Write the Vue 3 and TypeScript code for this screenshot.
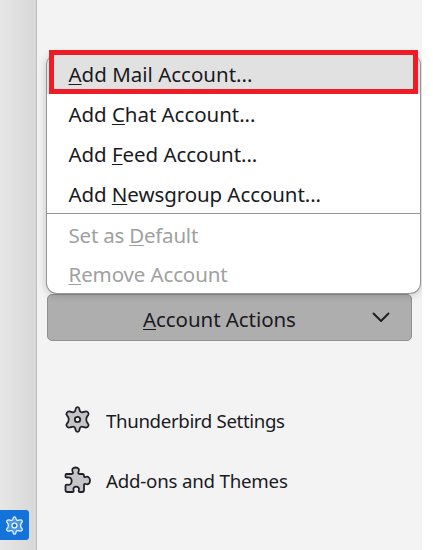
<script setup lang="ts">
interface MenuItem {
  before: string
  key: string
  after: string
  id: string
  disabled?: boolean
}

const addItems: MenuItem[] = [
  { id: 'mail', before: '', key: 'A', after: 'dd Mail Account...' },
  { id: 'chat', before: 'Add ', key: 'C', after: 'hat Account...' },
  { id: 'feed', before: 'Add ', key: 'F', after: 'eed Account...' },
  { id: 'news', before: 'Add ', key: 'N', after: 'ewsgroup Account...' },
]
const accountItems: MenuItem[] = [
  { id: 'default', before: 'Set as ', key: 'D', after: 'efault', disabled: true },
  { id: 'remove', before: '', key: 'R', after: 'emove Account', disabled: true },
]
const gear =
  'M10.3 2.8Q10.6 1 12 1T13.7 2.8L14.2 4.6Q15 6 16.7 5.5L18.8 4.9Q20.6 4.5 21.5 5.9T21.4 8.2L20.2 10Q19.2 12 20.2 14L21.4 15.8Q22.4 16.8 21.5 18.1T18.8 19.1L16.7 18.5Q15 18 14.2 19.4L13.7 21.2Q13.4 23 12 23T10.3 21.2L9.8 19.4Q9 18 7.3 18.5L5.2 19.1Q3.4 19.5 2.5 18.1T2.6 15.8L3.8 14Q4.8 12 3.8 10L2.6 8.2Q1.6 7.2 2.5 5.9T5.2 4.9L7.3 5.5Q9 6 9.8 4.6Z'
</script>

<template>
  <div class="window">
    <aside class="spaces">
      <button class="space-button" aria-label="Settings">
        <svg viewBox="0 0 24 24" width="19" height="19"><path :d="gear" /><circle cx="12" cy="12" r="3.1" /></svg>
      </button>
    </aside>
    <main class="pane">
      <button class="actions">
        <span class="actions-label"><u>A</u>ccount Actions</span>
        <svg class="chevron" viewBox="0 0 18 11" width="18" height="11"><path d="M1.5 1.5L9 9L16.5 1.5" /></svg>
      </button>
      <nav class="links">
        <a class="link">
          <svg viewBox="0 0 24 24" width="27" height="27"><path :d="gear" /><circle cx="12" cy="12" r="2.4" /></svg>
          <span class="settings">Thunderbird Settings</span>
        </a>
        <a class="link">
          <svg viewBox="0 0 27 27" width="27" height="27">
            <path d="M1.5 9.2Q1.5 8 2.7 8H7.6Q9.4 8 8.8 6.3C7.2 3.5 8.9 1.5 11.6 1.5S16 3.5 14.4 6.3Q13.8 8 15.6 8H18.2Q20 8 20 9.8Q20 11.6 21.6 11C24 10 26 11.7 26 14.6S24 19 21.6 18Q20 17.4 20 19V24Q20 26 18 26H16Q14.3 26 14.8 24.2C15.6 22 14.2 20.6 12.2 20.6S8.8 22 9.6 24.2Q10 26 8.4 26H3.5Q1.5 26 1.5 24V20Q1.5 18.4 3.2 18.7C6 19.3 7.7 17.6 7.7 15.1S6 10.9 3.2 11.5Q1.5 11.7 1.5 10.2Z" />
          </svg>
          <span class="addons">Add-ons and Themes</span>
        </a>
      </nav>
      <div class="menu">
        <div v-for="item in addItems" :key="item.id" class="item" :class="item.id">
          <span>{{ item.before }}<u>{{ item.key }}</u>{{ item.after }}</span>
        </div>
        <div class="separator"></div>
        <div v-for="item in accountItems" :key="item.id" class="item disabled" :class="item.id">
          <span>{{ item.before }}<u>{{ item.key }}</u>{{ item.after }}</span>
        </div>
      </div>
      <div class="highlight"></div>
    </main>
  </div>
</template>

<style>
body { background: #fff; overflow: hidden; }
</style>

<style scoped>
* { box-sizing: border-box; }
.window {
  display: flex;
  width: 422px;
  height: 550px;
  position: relative;
  overflow: hidden;
  background: #f3f3f3;
  color: #1a1a1f;
  font: 20.5px/30px "Noto Sans", "Open Sans", sans-serif;
}
.spaces {
  width: 37px;
  flex: none;
  display: flex;
  flex-direction: column;
  justify-content: flex-end;
  padding-bottom: 10px;
  background: linear-gradient(90deg, #e6e6e6, #d8d8d8);
  border-right: 1px solid #bdbdbd;
}
button { font: inherit; color: inherit; margin: 0; }
.space-button {
  width: 29px;
  height: 30px;
  padding: 0 1px 0 0;
  border: 0;
  border-radius: 0 3px 3px 0;
  background: #1373d9;
  display: flex;
  align-items: center;
  justify-content: center;
}
.space-button svg { fill: #4a96e6; stroke: #e8f3ff; stroke-width: 1.6; }
.space-button circle { fill: #1373d9; }
.pane { flex: 1; padding: 294px 10px 0; }
.actions {
  display: flex;
  align-items: center;
  width: 365px;
  height: 47px;
  padding: 2px 21px 0 95px;
  border: 1px solid #909090;
  border-radius: 5px;
  background: #aeaeae;
}
.actions-label { flex: 1; text-align: left; white-space: nowrap; letter-spacing: -.06px; }
.chevron { fill: none; stroke: #1d1d23; stroke-width: 1.9; stroke-linecap: round; stroke-linejoin: round; margin-top: -3px; }
.links { padding: 50px 0 0 17px; }
.link { display: flex; align-items: center; height: 60px; gap: 15px; font-size: 18.7px; white-space: nowrap; }
.link svg { margin-bottom: 3px; fill: #c5c5c8; stroke: #202126; stroke-width: 1.8; stroke-linejoin: round; flex: none; }
.link:first-child svg { stroke-width: 1.6; }
.link circle { fill: #f3f3f3; }
.settings { letter-spacing: -.36px; }
.addons { letter-spacing: -.21px; }
.menu {
  position: absolute;
  left: 46px;
  top: 54px;
  width: 375px;
  height: 240px;
  overflow: hidden;
  border: 1px solid #969696;
  border-top-color: #aaa;
  border-radius: 11px;
  background: #fff;
  box-shadow: 0 1px 8px rgba(0, 0, 0, .2);
}
.item { height: 40px; padding: 5px 0 0 21.5px; white-space: nowrap; letter-spacing: -.05px; }
.mail { background: #e1e1e1; height: 39px; padding-top: 4px; letter-spacing: 0; }
.news { letter-spacing: -.08px; }
.separator { height: 1px; margin-top: -1px; background: #969696; }
.disabled { color: #a0a0a0; height: 39px; padding-top: 6px; letter-spacing: -.12px; }
.default { letter-spacing: -.22px; }
.highlight {
  position: absolute;
  left: 49px;
  top: 50px;
  width: 369px;
  height: 44px;
  border: 5px solid #ee1c24;
}
u { text-decoration-thickness: 1px; text-underline-offset: 2px; text-decoration-skip-ink: none; }
</style>
